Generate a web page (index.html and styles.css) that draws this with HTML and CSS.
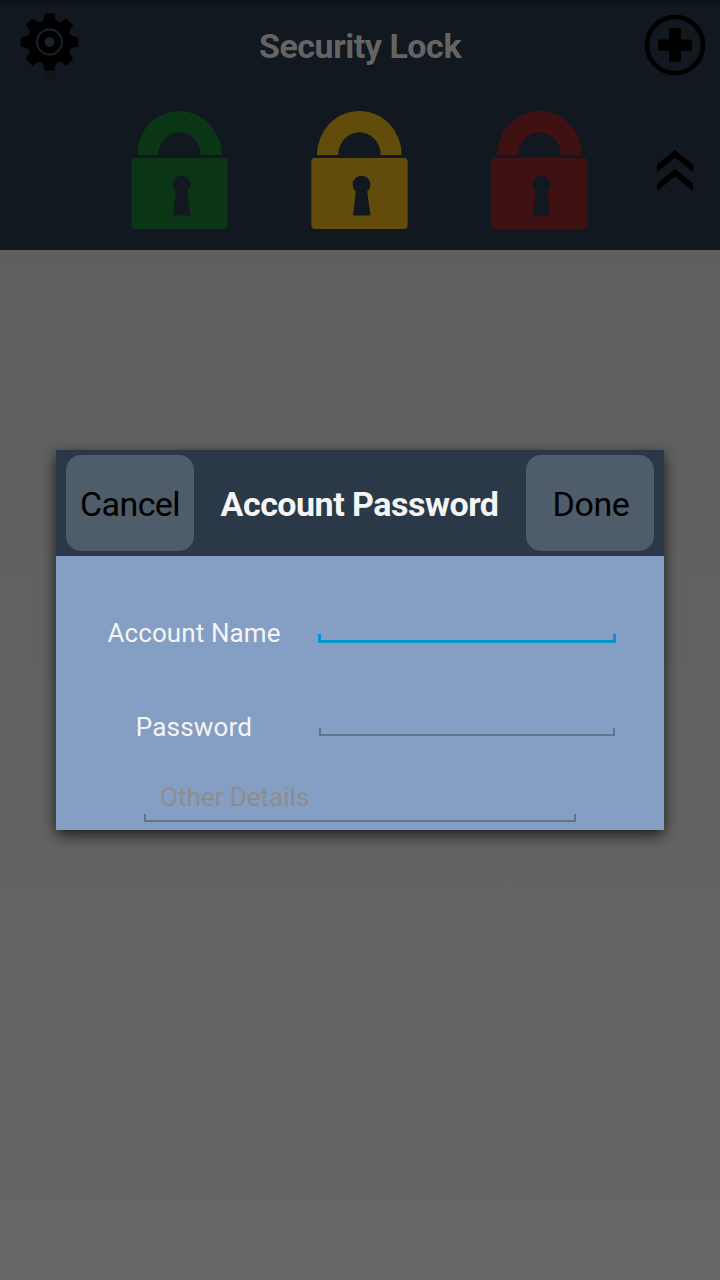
FILE: index.html
```
<!DOCTYPE html>
<html lang="en">
<head>
<meta charset="utf-8">
<title>Security Lock</title>
<link rel="stylesheet" href="styles.css">
</head>
<body>
<svg class="defs" width="0" height="0" aria-hidden="true">
  <symbol id="lock" viewBox="0 0 97 119">
    <path d="M6 44A42.300 44 0 0 1 90.700 44H69.700A21 22.500 0 0 0 27.200 44Z"/>
    <path fill-rule="evenodd" d="M4 47H93Q96.700 47 96.700 51V114Q96.700 118 93 118H4Q.3 118 .3 114V51Q.3 47 4 47ZM42 104.500H59.500L56.200 80.500A8.900 8.900 0 1 0 44.800 80.500Z"/>
  </symbol>
</svg>
<div class="screen">
  <header class="header">
    <div class="titlebar">
      <svg class="gear" width="60" height="72" viewBox="-29.500 -30 60 72">
        <path class="gear-reflection" d="M-5 30H5L6 38H-6Z"/>
        <g>
          <path id="cog" d="M-4.600-28.800H4.600L6.200-22Q9-20 9.500-17H-9.500Q-9-20-6.200-22Z"/>
          <use href="#cog" transform="rotate(45)"/>
          <use href="#cog" transform="rotate(90)"/>
          <use href="#cog" transform="rotate(135)"/>
          <use href="#cog" transform="rotate(180)"/>
          <use href="#cog" transform="rotate(225)"/>
          <use href="#cog" transform="rotate(270)"/>
          <use href="#cog" transform="rotate(315)"/>
          <circle r="20"/>
        </g>
        <circle class="gear-ring" r="12.500"/>
        <circle class="gear-hole" r="4.900"/>
      </svg>
      <h1 class="title">Security Lock</h1>
      <svg class="add" width="62" height="62" viewBox="0 0 62 62">
        <circle cx="31" cy="31" r="28" fill="none" stroke="#000" stroke-width="4.600"/>
        <path d="M27 14H35Q37 14 37 16V25.500H46Q48 25.500 48 27.500V35Q48 37 46 37H37V46Q37 48 35 48H27Q25 48 25 46V37H16Q14 37 14 35V27.500Q14 25.500 16 25.500H25V16Q25 14 27 14Z"/>
      </svg>
    </div>
    <div class="locks">
      <svg class="lock green" width="97" height="119"><use href="#lock"/></svg>
      <svg class="lock yellow" width="97" height="119"><use href="#lock"/></svg>
      <svg class="lock red" width="97" height="119"><use href="#lock"/></svg>
      <svg class="collapse" width="36" height="42" viewBox="0 0 36 42">
        <path d="M0 14.500L18 0 36 14.500V22L18 7.500 0 22ZM0 33.500L18 19 36 33.500V41L18 26.500 0 41Z"/>
      </svg>
    </div>
  </header>
  <section class="dialog">
    <div class="dialog-bar">
      <button class="button">Cancel</button>
      <h2 class="dialog-title">Account Password</h2>
      <button class="button done">Done</button>
    </div>
    <div class="form">
      <div class="row account">
        <span class="label">Account Name</span>
        <div class="field focused"></div>
      </div>
      <div class="row password">
        <span class="label">Password</span>
        <div class="field"></div>
      </div>
      <div class="details">
        <span class="hint">Other Details</span>
        <div class="field"></div>
      </div>
    </div>
  </section>
</div>
</body>
</html>
```
FILE: styles.css
```
* { box-sizing: border-box; }
body { margin: 0; font-family: Roboto, "Liberation Sans", sans-serif; }
h1, h2 { margin: 0; white-space: nowrap; }
svg { display: block; }
.defs { position: absolute; }
.screen {
  position: relative;
  width: 720px;
  height: 1280px;
  overflow: hidden;
  background: linear-gradient(#5f5f5f 250px, #666666 1280px);
}
.header {
  height: 250px;
  background: linear-gradient(#0d1214, #12181f 8px);
}
.titlebar {
  display: flex;
  justify-content: space-between;
  align-items: flex-start;
  height: 111px;
  padding: 12px 14px 0 20px;
}
.gear-reflection { fill: #0f151b; }
.gear-ring { fill: none; stroke: #1b222a; stroke-width: 2; }
.gear-hole { fill: #1b222a; }
.title {
  margin-top: 14px;
  padding-right: 4px;
  color: #646464;
  font-size: 34px;
  line-height: 40px;
  letter-spacing: -.45px;
}
.add { margin-top: 2px; }
.locks {
  display: flex;
  padding-left: 131px;
}
.lock { margin-right: 83px; }
.green { fill: #0b3615; }
.yellow { fill: #624c0c; }
.red { fill: #3f1112; }
.collapse { margin: 39px 0 0 -14px; }
.dialog {
  position: absolute;
  left: 56px;
  top: 450px;
  width: 608px;
  height: 380px;
  background: #859ec3;
  box-shadow: 0 5px 14px rgba(0, 0, 0, .72);
}
.dialog-bar {
  display: flex;
  justify-content: space-between;
  align-items: center;
  height: 106px;
  padding: 0 10px;
  background: #2a3848;
}
.button {
  width: 128px;
  height: 96px;
  padding: 1px 0 0;
  border: 0;
  border-radius: 15px;
  background: #4f5c69;
  color: #000;
  font: 34px/40px Roboto, "Liberation Sans", sans-serif;
  letter-spacing: -.6px;
}
.done { padding-left: 2px; letter-spacing: -.4px; }
.dialog-title {
  padding-top: 1px;
  padding-right: 1px;
  color: #f5f5f5;
  font-size: 34px;
  line-height: 40px;
  letter-spacing: -.5px;
}
.row {
  display: flex;
  align-items: flex-end;
  padding-left: 14px;
}
.account { height: 87px; }
.password { height: 93px; }
.label {
  width: 248px;
  color: #f5f5f5;
  font-size: 26px;
  line-height: 30px;
  letter-spacing: .1px;
  text-align: center;
  white-space: nowrap;
}
.account .label { margin-bottom: -5px; }
.password .label { margin-bottom: -6px; letter-spacing: .2px; }
.field {
  width: 296px;
  height: 8px;
  margin-left: 1px;
  border: 2px solid #62748d;
  border-top: 0;
}
.focused {
  width: 298px;
  height: 9px;
  margin-left: 0;
  border: 3px solid #0099cc;
  border-top: 0;
}
.details { padding: 46px 0 0 88px; }
.hint {
  display: block;
  height: 32px;
  padding-left: 16px;
  color: #8d8d8d;
  font-size: 26px;
  line-height: 30px;
}
.details .field { width: 432px; margin-left: 0; }
```
